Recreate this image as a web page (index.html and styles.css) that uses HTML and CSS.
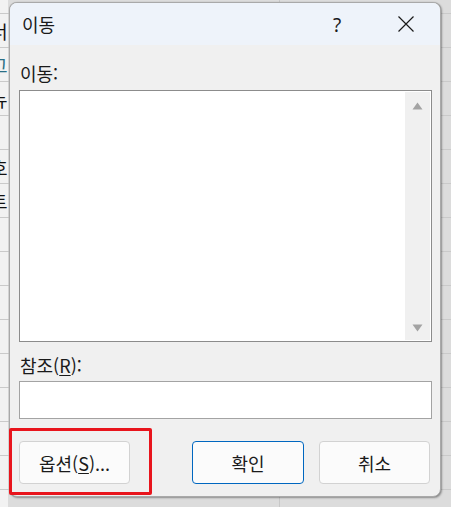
FILE: index.html
```html
<!DOCTYPE html>
<html lang="ko">
<head>
<meta charset="utf-8">
<title>이동</title>
<link rel="stylesheet" href="styles.css">
</head>
<body>
<div class="sheet">
  <div class="row first"></div>
  <div class="row"><span class="cell">너</span></div>
  <div class="row"><span class="cell cyan">그</span></div>
  <div class="row"><span class="cell">뉴</span></div>
  <div class="row"></div>
  <div class="row"><span class="cell">호</span></div>
  <div class="row"><span class="cell">트</span></div>
  <div class="row"></div>
  <div class="row"></div>
  <div class="row"></div>
  <div class="row"></div>
  <div class="row"></div>
  <div class="row"></div>
  <div class="row"></div>
  <div class="row"></div>
</div>

<div class="dialog">
  <div class="titlebar">
    <span class="title">이동</span>
    <span class="cap help">?</span>
    <span class="cap close">
      <svg width="16" height="16" viewBox="0 0 16 16"><path d="M0.5 0.5 L15.5 15.5 M15.5 0.5 L0.5 15.5" stroke="#1a1a1a" stroke-width="1.2" fill="none"/></svg>
    </span>
  </div>
  <div class="content">
    <div class="label">이동:</div>
    <div class="list">
      <div class="list-area"></div>
      <div class="vscroll">
        <svg width="11" height="8" viewBox="0 0 11 8"><path d="M5.5 0.5 L10.5 7.5 L0.5 7.5 Z" fill="#a3a3a3"/></svg>
        <svg width="11" height="8" viewBox="0 0 11 8"><path d="M0.5 0.5 L10.5 0.5 L5.5 7.5 Z" fill="#a3a3a3"/></svg>
      </div>
    </div>
    <div class="label ref-label">참조(<u>R</u>):</div>
    <div class="input"></div>
    <div class="buttons">
      <button class="btn">옵션(<u>S</u>)...</button>
      <div class="btn-group">
        <button class="btn primary">확인</button>
        <button class="btn">취소</button>
      </div>
    </div>
  </div>
</div>

<div class="highlight"></div>
</body>
</html>
```
FILE: styles.css
```css
* { box-sizing: border-box; }

html, body {
  margin: 0;
  padding: 0;
}

body {
  width: 451px;
  height: 507px;
  overflow: hidden;
  position: relative;
  background: #e4e4e4;
  font-family: "Noto Sans CJK KR", "Noto Sans", sans-serif;
  color: #1a1a1a;
}

.sheet {
  display: flex;
  flex-direction: column;
  background:
    linear-gradient(to right, transparent 279px, #c8c8c8 279px, #c8c8c8 280px, transparent 280px),
    linear-gradient(to right, #f2f2f2 0, #f2f2f2 8px, #dcdcdc 8px, #dcdcdc 100%);
  height: 507px;
}

.row {
  height: 34px;
  flex: none;
  border-bottom: 1px solid #cacaca;
  display: flex;
  align-items: center;
  overflow: hidden;
}

.row.first { height: 14px; }

.cell {
  font-size: 18px;
  line-height: 20px;
  margin-left: -9px;
  color: #111;
}

.cell.cyan { color: #2a6f86; }

.dialog {
  position: absolute;
  left: 9px;
  top: 2px;
  width: 432px;
  height: 495px;
  border: 1px solid #a9a9a9;
  border-radius: 8px;
  background: #f0f0f0;
  box-shadow: 1px 1px 2px rgba(0, 0, 0, 0.35), 0 0 1px rgba(0, 0, 0, 0.2);
  overflow: hidden;
  display: flex;
  flex-direction: column;
}

.titlebar {
  height: 42px;
  flex: none;
  background: #eef3fa;
  display: flex;
  align-items: center;
  padding-left: 12px;
}

.title {
  flex: 1;
  font-size: 18px;
  line-height: 22px;
  color: #1a1a1a;
}

.cap {
  width: 46px;
  height: 42px;
  display: flex;
  align-items: center;
  justify-content: center;
  flex: none;
}

.help {
  font-family: "Noto Sans", sans-serif;
  font-size: 19px;
  margin-right: 23px;
  padding-top: 1px;
}

.close {
  margin-right: 11px;
}

.content {
  flex: 1;
  display: flex;
  flex-direction: column;
  padding: 17px 8px 0 9px;
}

.label {
  font-size: 18px;
  line-height: 22px;
  height: 22px;
  padding-left: 1px;
}

.label u { text-underline-offset: 2px; }

.list {
  margin-top: 6px;
  height: 252px;
  border: 1px solid #8c8c8c;
  background: #ffffff;
  display: flex;
}

.list-area { flex: 1; }

.vscroll {
  width: 25px;
  margin: 1px 1px 1px 0;
  background: #f0f0f0;
  display: flex;
  flex-direction: column;
  align-items: center;
  justify-content: space-between;
  padding: 10px 0 8px;
}

.vscroll svg { display: block; }

.ref-label {
  margin-top: 12px;
}

.input {
  margin-top: 5px;
  height: 38px;
  border: 1px solid #a3a3a3;
  background: #ffffff;
}

.buttons {
  margin-top: 22px;
  display: flex;
  justify-content: space-between;
  padding-right: 2px;
}

.btn-group {
  display: flex;
  gap: 15px;
}

.btn {
  width: 111px;
  height: 43px;
  border: 1px solid #d2d2d2;
  border-radius: 4px;
  background: #fbfbfb;
  font-family: "Noto Sans CJK KR", "Noto Sans", sans-serif;
  font-size: 18px;
  line-height: 22px;
  color: #1a1a1a;
  padding: 0;
  padding-top: 1px;
}

.btn.primary {
  width: 112px;
  border-color: #0067c0;
}

.btn u { text-underline-offset: 2px; }

.highlight {
  position: absolute;
  left: 9px;
  top: 428px;
  width: 143px;
  height: 67px;
  border: 3px solid #e8141c;
  border-radius: 2px;
}
```
